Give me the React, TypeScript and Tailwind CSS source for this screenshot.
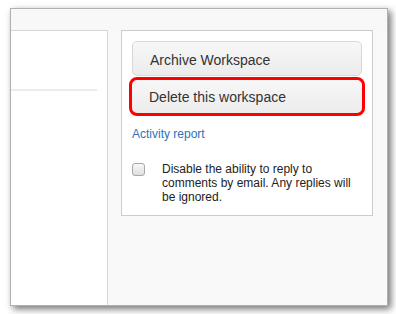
export default function App() {
  return (
    <div className="h-[314px] w-[396px] bg-white pl-[10px] pt-[8px] font-['Liberation_Sans',Arial,sans-serif]">
      <div className="flex h-[298px] w-[378px] flex-col border border-[#b0b0b0] bg-[#f9f9f9] shadow-[3px_3px_7px_rgba(0,0,0,0.55)]">
        <div className="h-[21px] shrink-0 bg-[#f8f8f8]" />
        <div className="flex flex-1">
          <div className="w-[97px] shrink-0 border-r border-t border-[#d6d6d6] bg-white pt-[58px]">
            <div className="mr-[10px] h-[2px] bg-[#ececec]" />
          </div>
          <div className="flex-1 pl-[13px]">
            <div className="w-[252px] border border-[#cccccc] bg-white px-[10px] pb-[11px] pt-[10px]">
              <button className="flex h-[35px] w-[230px] items-center rounded-[5px] border border-[#d8d8d8] bg-gradient-to-b from-[#f7f7f7] to-[#ececec] pl-[17px] pt-[3px] text-[14px] text-[#333]">
                Archive Workspace
              </button>
              <button className="mt-[4px] flex h-[33px] w-[230px] items-center rounded-[5px] bg-gradient-to-b from-[#f7f7f7] to-[#ececec] pl-[17px] pt-[2px] text-[14px] text-[#333] outline-[3px] outline-offset-0 outline-[#ff0000] outline-solid">
                Delete this workspace
              </button>
              <a className="mt-[14px] block text-[12px] leading-[14px] text-[#2f73b8]">Activity report</a>
              <div className="mt-[21px] flex items-start">
                <span className="mt-[1px] h-[13px] w-[13px] shrink-0 rounded-[3px] border border-[#a8a8a8] bg-gradient-to-b from-[#f8f8f8] to-[#dedede]" />
                <p className="ml-[17px] text-[12px] leading-[14px] text-[#222]">
                  Disable the ability to reply to comments by email. Any replies will be ignored.
                </p>
              </div>
            </div>
          </div>
        </div>
      </div>
    </div>
  );
}
